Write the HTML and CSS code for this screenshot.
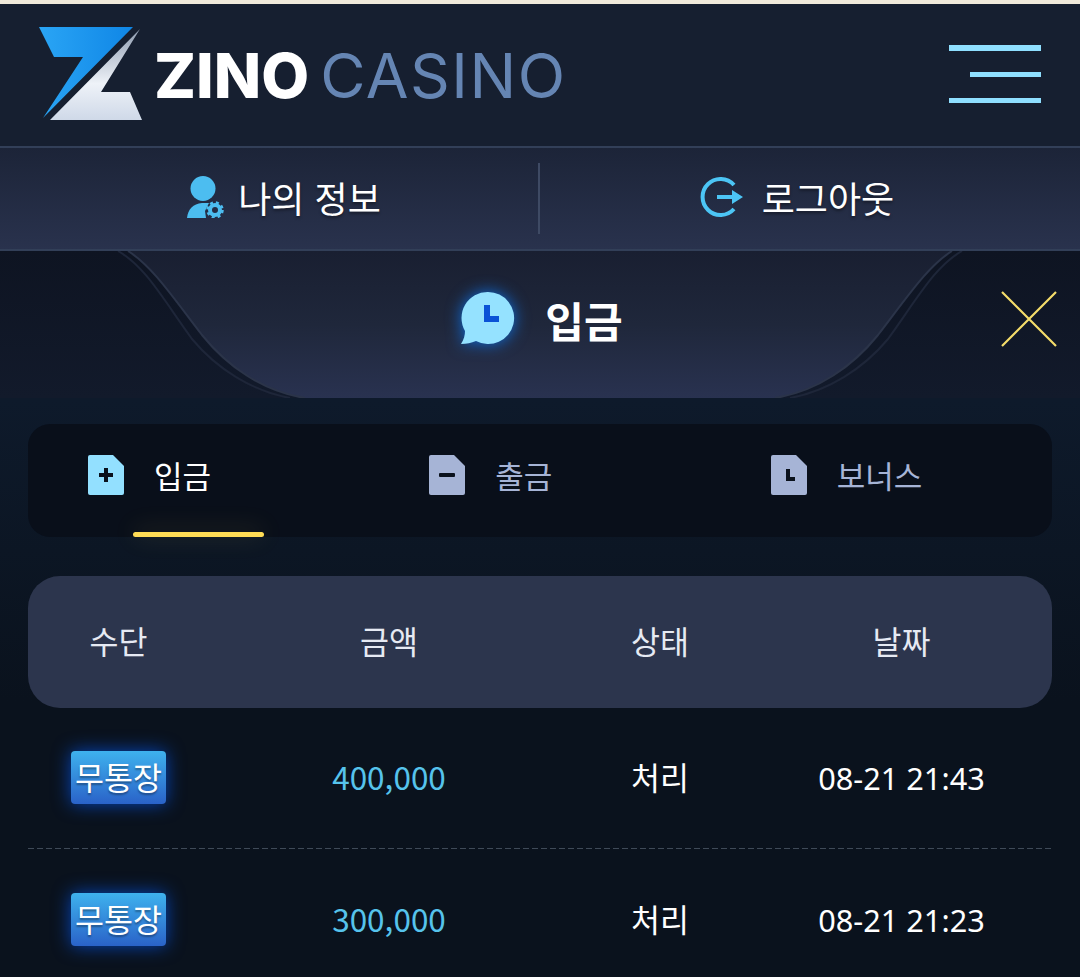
FILE: index.html
```html
<!DOCTYPE html>
<html lang="ko">
<head>
  <meta charset="UTF-8">
  <meta name="viewport" content="width=device-width, initial-scale=1.0">
  <title>Zino Casino</title>
  <link rel="stylesheet" href="styles.css">
</head>
<body>
  <header class="topbar">
    <div class="logo">
      <svg class="logo-mark" width="106" height="96" viewBox="0 0 106 96">
        <defs>
          <linearGradient id="markBlue" x1="0" y1="0" x2="1" y2="0">
            <stop offset="0" stop-color="#2aa5f5"/>
            <stop offset="1" stop-color="#0f86e6"/>
          </linearGradient>
          <linearGradient id="markWhite" x1="0" y1="0" x2="0" y2="1">
            <stop offset="0" stop-color="#8f9cb0"/>
            <stop offset="0.6" stop-color="#eef2f8"/>
            <stop offset="1" stop-color="#cfd9e8"/>
          </linearGradient>
        </defs>
        <polygon points="0,0 94,0 4,91 44,30 15,30" fill="url(#markBlue)"/>
        <polygon points="101,2 11,93 103,93 91,65 62,65" fill="url(#markWhite)"/>
      </svg>
      <span class="logo-zino">ZINO</span>
      <span class="logo-casino">CASINO</span>
    </div>
    <div class="menu-btn">
      <span class="menu-line"></span>
      <span class="menu-line short"></span>
      <span class="menu-line thin"></span>
    </div>
  </header>

  <nav class="subnav">
    <a class="subnav-item info">
      <svg width="37" height="42" viewBox="0 0 37 42">
        <circle cx="16" cy="12.5" r="12.5" fill="#4cbdf0"/>
        <path d="M0 42 C1 33 6 28 15 27 L22 27 L18 35 L19 42 Z" fill="#4cbdf0"/>
        <circle cx="28" cy="34" r="5" fill="none" stroke="#4cbdf0" stroke-width="4"/>
        <circle cx="28" cy="34" r="7.5" fill="none" stroke="#4cbdf0" stroke-width="2.5" stroke-dasharray="3 3"/>
      </svg>
      <span>나의 정보</span>
    </a>
    <span class="subnav-divider"></span>
    <a class="subnav-item logout">
      <svg width="44" height="40" viewBox="0 0 44 40">
        <path d="M35 8 A18 18 0 1 0 35 32" fill="none" stroke="#4cc5f5" stroke-width="4"/>
        <path d="M18 18 H33 V13 L44 20 L33 27 V22 H18 Z" fill="#4cc5f5"/>
      </svg>
      <span>로그아웃</span>
    </a>
  </nav>

  <main class="panel">
    <div class="panel-title">
      <svg class="title-bg" width="1080" height="147" viewBox="0 0 1080 147">
        <defs>
          <linearGradient id="titleFill" x1="0" y1="0" x2="0" y2="1">
            <stop offset="0" stop-color="#191f31"/>
            <stop offset="0.5" stop-color="#1f273b"/>
            <stop offset="1" stop-color="#293250"/>
          </linearGradient>
        </defs>
        <path d="M128 0 C152 15 172 45 202 84 C227 115 262 140 305 147 L775 147 C818 140 853 115 878 84 C908 45 928 15 952 0 Z" fill="url(#titleFill)"/>
        <path d="M128 0 C152 15 172 45 202 84 C227 115 262 140 305 147" fill="none" stroke="#2b3449" stroke-width="2"/>
        <path d="M952 0 C928 15 908 45 878 84 C853 115 818 140 775 147" fill="none" stroke="#2b3449" stroke-width="2"/>
        <path d="M118 0 C145 15 163 48 192 88 C217 118 252 140 290 147" fill="none" stroke="#1e2639" stroke-width="2"/>
        <path d="M962 0 C935 15 917 48 888 88 C863 118 828 140 790 147" fill="none" stroke="#1e2639" stroke-width="2"/>
      </svg>
      <svg class="title-icon" width="54" height="54" viewBox="0 0 54 54">
        <path d="M27 1 A26 26 0 1 1 15 50 C10 52 6 53 0 53 C3 48 4 44 4 40 A26 26 0 0 1 27 1 Z" fill="#95e2ff"/>
        <path d="M23 14 H29 V25 H38 V31 H23 Z" fill="#0a52d6"/>
      </svg>
      <h2 class="title-text">입금</h2>
      <svg class="close-btn" width="56" height="56" viewBox="0 0 56 56">
        <path d="M1 1 L55 55 M55 1 L1 55" stroke="#f5dd6a" stroke-width="2.2" fill="none"/>
      </svg>
    </div>

    <div class="tabs">
      <div class="tab active">
        <svg width="36" height="40" viewBox="0 0 36 40">
          <path d="M2 0 H25 L36 11 V38 A2 2 0 0 1 34 40 H2 A2 2 0 0 1 0 38 V2 A2 2 0 0 1 2 0 Z" fill="#93e0ff"/>
          <path d="M16 13 H20 V18 H25 V22 H20 V27 H16 V22 H11 V18 H16 Z" fill="#0a111c"/>
        </svg>
        <span>입금</span>
        <i class="tab-bar"></i>
      </div>
      <div class="tab">
        <svg width="36" height="40" viewBox="0 0 36 40">
          <path d="M2 0 H25 L36 11 V38 A2 2 0 0 1 34 40 H2 A2 2 0 0 1 0 38 V2 A2 2 0 0 1 2 0 Z" fill="#a6b4d6"/>
          <rect x="10" y="18" width="16" height="4" rx="1" fill="#0a111c"/>
        </svg>
        <span>출금</span>
      </div>
      <div class="tab">
        <svg width="36" height="40" viewBox="0 0 36 40">
          <path d="M2 0 H25 L36 11 V38 A2 2 0 0 1 34 40 H2 A2 2 0 0 1 0 38 V2 A2 2 0 0 1 2 0 Z" fill="#a6b4d6"/>
          <path d="M15 14 H19 V22 H24 V26 H15 Z" fill="#0a111c"/>
        </svg>
        <span>보너스</span>
      </div>
    </div>

    <div class="table-head table-cols">
      <span>수단</span>
      <span>금액</span>
      <span>상태</span>
      <span>날짜</span>
    </div>

    <div class="table-row table-cols">
      <span class="badge-cell"><b class="badge">무통장</b></span>
      <span class="amount">400,000</span>
      <span>처리</span>
      <span class="date">08-21 21:43</span>
    </div>
    <div class="table-row table-cols">
      <span class="badge-cell"><b class="badge">무통장</b></span>
      <span class="amount">300,000</span>
      <span>처리</span>
      <span class="date">08-21 21:23</span>
    </div>
  </main>
</body>
</html>
```

FILE: styles.css
```css
html,
body {
  height: 977px;
  overflow: hidden;
}

body {
  margin: 0;
  padding-top: 4px;
  box-sizing: border-box;
  background-color: #f0eadb;
  font-family: "Noto Sans CJK KR", "Noto Sans", sans-serif;
  color: #fff;
}

.topbar {
  height: 144px;
  box-sizing: border-box;
  padding: 23px 39px 0 39px;
  display: flex;
  justify-content: space-between;
  align-items: flex-start;
  background-color: #161f30;
  border-bottom: 2px solid #323f58;
}

.logo {
  display: flex;
  align-items: center;
  height: 96px;
  font-family: Inter, sans-serif;
  font-size: 62px;
  line-height: 1;
}

.logo-mark {
  margin-right: 9px;
}

.logo-zino {
  margin-top: 2px;
  margin-right: 11px;
  font-weight: 800;
}

.logo-casino {
  margin-top: 2px;
  font-weight: 400;
  letter-spacing: 1.5px;
  color: #6585b3;
}

.menu-btn {
  width: 92px;
  display: flex;
  flex-direction: column;
  align-items: flex-end;
  gap: 21px;
  padding-top: 18px;
}

.menu-line {
  display: block;
  width: 92px;
  height: 6px;
  background-color: #8fdfff;
}

.menu-line.short {
  width: 71px;
  height: 5px;
}

.menu-line.thin {
  height: 5px;
}

.subnav {
  height: 103px;
  box-sizing: border-box;
  display: grid;
  grid-template-columns: 538px 2px 1fr;
  align-items: center;
  background: linear-gradient(#1c2438, #29324d);
  border-bottom: 2px solid #323f58;
}

.subnav-item {
  display: flex;
  justify-content: center;
  align-items: center;
  padding-bottom: 4px;
  font-size: 36px;
  line-height: 1;
  text-shadow: 0 2px 3px rgba(0, 0, 0, 0.4);
}

.subnav-item.info {
  gap: 14px;
  padding-left: 30px;
}

.subnav-item.logout {
  gap: 19px;
  padding-right: 27px;
}

.subnav-divider {
  width: 2px;
  height: 71px;
  background-color: #3e4a64;
}

.panel {
  height: 726px;
  background: linear-gradient(#0e1a2b 150px, #0a121d 450px);
}

.panel-title {
  position: relative;
  height: 147px;
  display: flex;
  justify-content: center;
  align-items: center;
  gap: 30px;
  background: linear-gradient(#0e1422, #121a2b);
}

.title-bg {
  position: absolute;
  left: 0;
  top: 0;
}

.title-icon {
  position: relative;
  margin: 0 0 14px 4px;
  filter: drop-shadow(0 0 8px #0f6fe0);
}

.title-text {
  position: relative;
  margin: 0 0 8px;
  font-size: 42px;
  font-weight: 700;
  line-height: 1.2;
}

.close-btn {
  position: absolute;
  left: 1001px;
  top: 40px;
}

.tabs {
  margin: 26px 28px 0;
  height: 113px;
  display: grid;
  grid-template-columns: repeat(3, 1fr);
  background-color: #090f1a;
  border-radius: 22px;
}

.tab {
  position: relative;
  display: flex;
  align-items: flex-start;
  gap: 30px;
  padding: 31px 0 0 60px;
  font-size: 31px;
  line-height: 40px;
  color: #a6b4d6;
}

.tab.active {
  color: #fff;
}

.tab-bar {
  position: absolute;
  left: 105px;
  bottom: 0;
  width: 131px;
  height: 5px;
  border-radius: 3px;
  background-color: #ffdc55;
  box-shadow: 0 -2px 24px rgba(255, 220, 85, 0.22);
}

.table-cols {
  margin: 0 28px;
  display: grid;
  grid-template-columns: 181px 360px 182px 1fr;
  align-items: center;
  text-align: center;
  font-size: 31.5px;
}

.table-head {
  margin-top: 39px;
  height: 132px;
  box-sizing: border-box;
  padding-bottom: 4px;
  background-color: #2c354d;
  border-radius: 32px;
  color: #e6eaf3;
}

.table-row {
  height: 141px;
  box-sizing: border-box;
  padding-bottom: 1px;
  margin-bottom: 1px;
  background: linear-gradient(to right, #3f4a58 6px, transparent 6px) left bottom / 9px 1px repeat-x;
}

.table-row span {
  margin-bottom: 4px;
}

.table-row .badge-cell {
  margin-bottom: 2px;
}

.table-row .date {
  margin-bottom: 0;
  font-family: "Noto Sans", sans-serif;
  font-size: 30.7px;
}

.amount {
  color: #56c3ec;
}

.badge {
  display: block;
  width: 95px;
  height: 53px;
  margin: 0 auto 0 43px;
  border-radius: 4px;
  font-weight: 400;
  font-size: 31.5px;
  line-height: 51px;
  background: linear-gradient(#3eb2ee, #2a62c8);
  box-shadow: 0 0 18px #0645b8;
  text-shadow: 0 2px 2px rgba(0, 0, 0, 0.35);
}
```
